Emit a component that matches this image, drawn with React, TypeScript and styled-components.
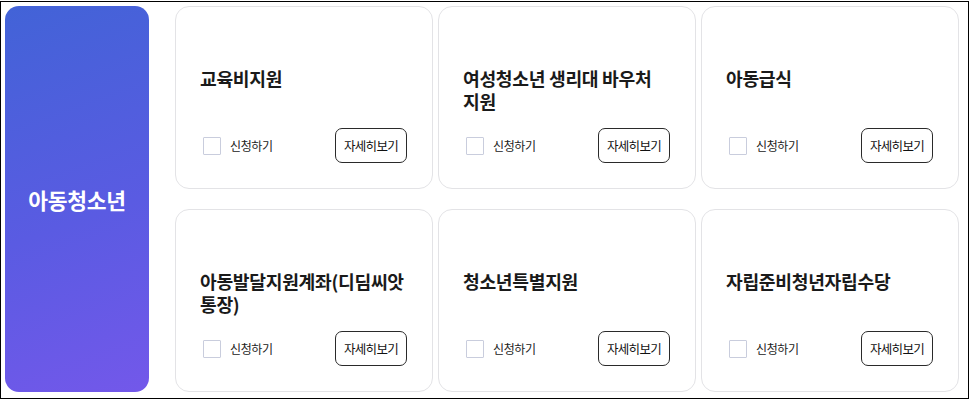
import React from "react";
import styled, { createGlobalStyle } from "styled-components";

const GlobalStyle = createGlobalStyle`
  * { box-sizing: border-box; }
  body {
    margin: 0;
    background: #ffffff;
    font-family: "Noto Sans CJK KR", "Noto Sans", sans-serif;
  }
`;

interface Program {
  title: string;
}

const programs: Program[] = [
  { title: "교육비지원" },
  { title: "여성청소년 생리대 바우처 지원" },
  { title: "아동급식" },
  { title: "아동발달지원계좌(디딤씨앗 통장)" },
  { title: "청소년특별지원" },
  { title: "자립준비청년자립수당" },
];

export default function App() {
  return (
    <>
      <GlobalStyle />
      <Frame>
        <Category>아동청소년</Category>
        <CardGrid>
          {programs.map((item, index) => (
            <Card key={index}>
              <Title>{item.title}</Title>
              <Footer>
                <ApplyLabel>
                  <CheckBox />
                  <LabelText>신청하기</LabelText>
                </ApplyLabel>
                <DetailButton>자세히보기</DetailButton>
              </Footer>
            </Card>
          ))}
        </CardGrid>
      </Frame>
    </>
  );
}

const Frame = styled.div`
  width: 969px;
  height: 398px;
  margin-top: 1px;
  border: 1px solid #000000;
  padding: 4px 0 0 4px;
  display: flex;
  gap: 26px;
`;

const Category = styled.div`
  width: 144px;
  height: 386px;
  border-radius: 14px;
  background: linear-gradient(160deg, #4263d7 0%, #5a5be2 55%, #7358ea 100%);
  color: #ffffff;
  font-size: 21.5px;
  font-weight: 700;
  letter-spacing: -0.3px;
  display: flex;
  align-items: center;
  justify-content: center;
`;

const CardGrid = styled.div`
  display: grid;
  grid-template-columns: repeat(3, 258px);
  grid-template-rows: repeat(2, 183px);
  column-gap: 5px;
  row-gap: 20px;
`;

const Card = styled.div`
  border: 1px solid #e3e3e6;
  border-radius: 14px;
  background: #ffffff;
  padding: 60px 25px 25px 24px;
  display: flex;
  flex-direction: column;
`;

const Title = styled.div`
  font-size: 18.2px;
  font-weight: 700;
  line-height: 23px;
  color: #1a1a1a;
  letter-spacing: -0.3px;
  word-break: keep-all;
`;

const Footer = styled.div`
  margin-top: auto;
  display: flex;
  align-items: center;
  justify-content: space-between;
`;

const ApplyLabel = styled.label`
  display: flex;
  align-items: center;
  gap: 9px;
  cursor: pointer;
`;

const CheckBox = styled.span`
  width: 18px;
  height: 18px;
  margin-left: 3px;
  border: 1px solid #c9cddd;
  border-radius: 1px;
  background: #ffffff;
`;

const LabelText = styled.span`
  font-size: 12px;
  color: #222222;
  letter-spacing: -0.4px;
`;

const DetailButton = styled.button`
  width: 72px;
  height: 35px;
  padding: 0;
  border: 1px solid #2a2a2a;
  border-radius: 7px;
  background: #ffffff;
  font-family: "Noto Sans CJK KR", "Noto Sans", sans-serif;
  font-size: 12.5px;
  letter-spacing: -0.7px;
  color: #111111;
  cursor: pointer;
`;
